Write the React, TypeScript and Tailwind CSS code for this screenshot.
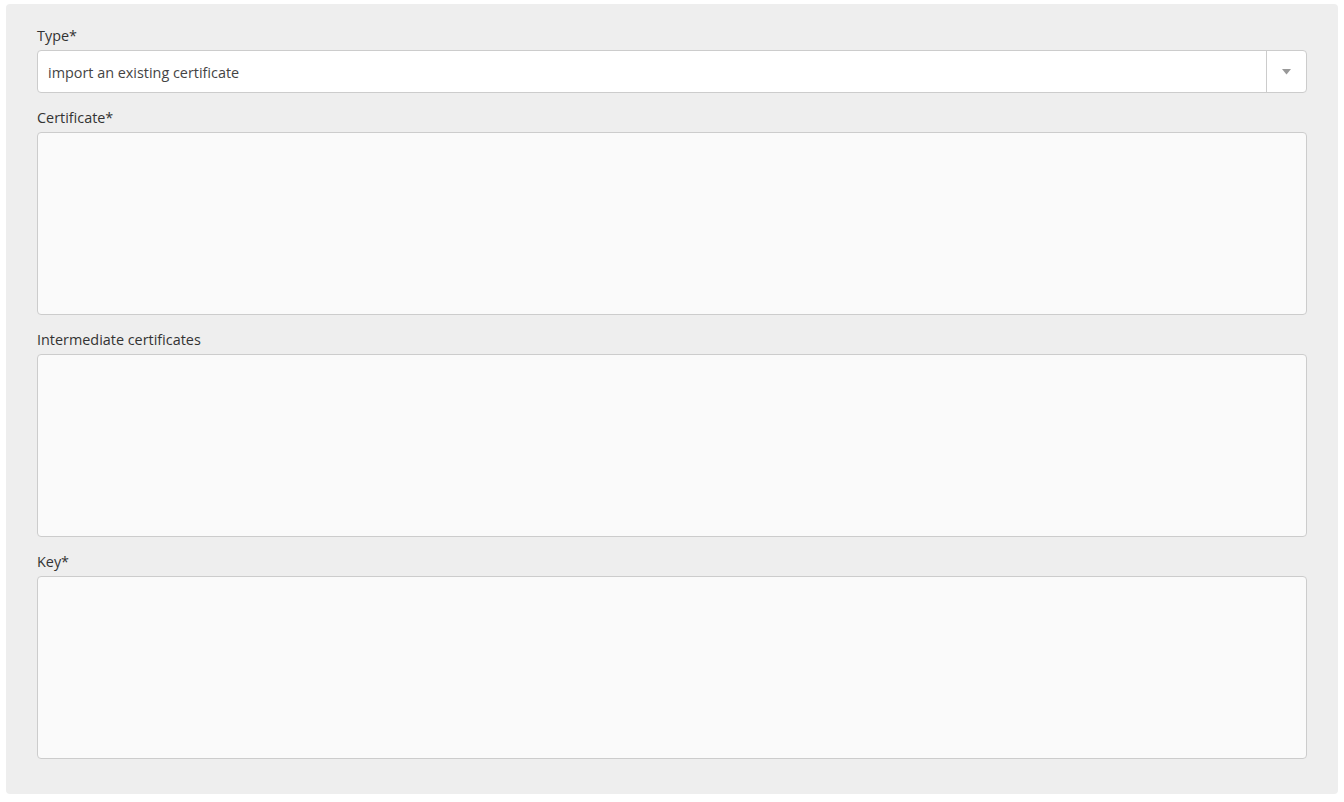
import React from "react";

function Label({ children }: { children: React.ReactNode }) {
  return <div className="text-[14.4px] leading-[20px] pt-[1px] mb-[4px] text-[#333333]">{children}</div>;
}

function Area() {
  return <textarea className="block w-full h-[183px] bg-[#fafafa] border border-[#cccccc] rounded-[4px] resize-none outline-none" />;
}

export default function App() {
  return (
    <div className="bg-white w-[1344px] h-[802px] pt-[4px] px-[6px] pb-[8px]" style={{ fontFamily: '"Open Sans", "Noto Sans", sans-serif' }}>
      <div className="bg-[#eeeeee] rounded-[4px] h-full px-[31px] pt-[21px] pb-[35px] flex flex-col gap-[14px]">
        <div>
          <Label>Type*</Label>
          <div className="h-[43px] flex bg-white border border-[#cccccc] rounded-[4px]">
            <div className="flex-1 flex items-center pl-[10px] pt-[2px] text-[14.4px] text-[#444444]">import an existing certificate</div>
            <div className="w-[40px] border-l border-[#cccccc] flex items-center justify-center">
              <svg width="9" height="6" viewBox="0 0 9 6"><path d="M0 0 H9 L4.5 5.5 Z" fill="#999999" /></svg>
            </div>
          </div>
        </div>
        <div>
          <Label>Certificate*</Label>
          <Area />
        </div>
        <div>
          <Label>Intermediate certificates</Label>
          <Area />
        </div>
        <div>
          <Label>Key*</Label>
          <Area />
        </div>
      </div>
    </div>
  );
}
